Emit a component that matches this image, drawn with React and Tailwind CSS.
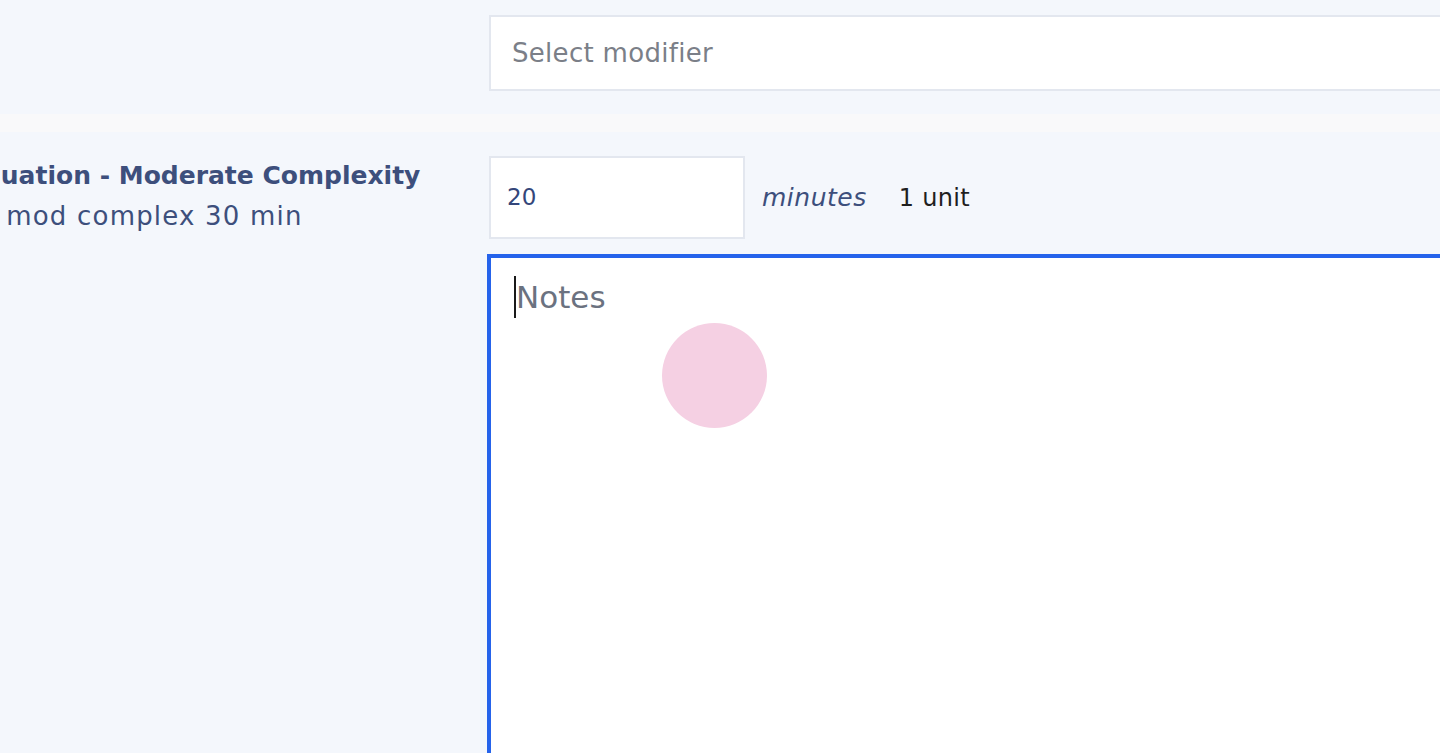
import React from "react";

const App = () => {
  return (
    <div className="relative h-[753px] w-full overflow-hidden bg-[#f4f7fc] font-['DejaVu_Sans',sans-serif]">
      {/* modifier row */}
      <div className="flex pt-[15px]">
        <div className="w-[489px] shrink-0" />
        <div className="-mr-10 flex h-[76px] flex-1 items-center border-2 border-[#e3e7ef] bg-white pl-[21px]">
          <span className="text-[26px] tracking-[0.3px] text-[#7b7f88]">Select modifier</span>
        </div>
      </div>

      <div className="mt-[23px] h-[18px] bg-[#f9f9fa]" />

      {/* code row */}
      <div className="flex pt-[24px]">
        <div className="w-[489px] shrink-0 overflow-hidden">
          <div className="whitespace-nowrap leading-[40px] text-[#3d4f7c]">
            <div className="-ml-[58px] text-[25px] font-semibold">Evaluation - Moderate Complexity</div>
            <div className="-ml-[106px] text-[26px] tracking-[1.2px]">PT eval mod complex 30 min</div>
          </div>
        </div>

        <div className="flex-1">
          <div className="flex items-center">
            <div className="flex h-[83px] w-[256px] items-center border-2 border-[#e3e7ef] bg-white pl-4">
              <span className="text-[23px] text-[#34467a]">20</span>
            </div>
            <span className="ml-[17px] text-[25px] italic tracking-[0.5px] text-[#3d4f7c]">minutes</span>
            <span className="ml-[32px] text-[24px] tracking-[0.3px] text-[#1f1f1f]">1 unit</span>
          </div>

          <div className="relative -ml-[2px] -mr-10 mt-[15px] h-[540px] border-4 border-[#2563eb] bg-white pl-[25px] pt-[18px]">
            <div className="relative flex items-center">
              <span className="absolute -left-[2px] top-[0px] h-[42px] w-[2px] bg-[#1a1a1a]" />
              <span className="text-[31px] leading-[42px] text-[#6b7280]">Notes</span>
            </div>
          </div>
        </div>
      </div>

      {/* touch indicator */}
      <div className="absolute left-[662px] top-[323px] h-[105px] w-[105px] rounded-full bg-[#f5d0e3]" />
    </div>
  );
};

export default App;
